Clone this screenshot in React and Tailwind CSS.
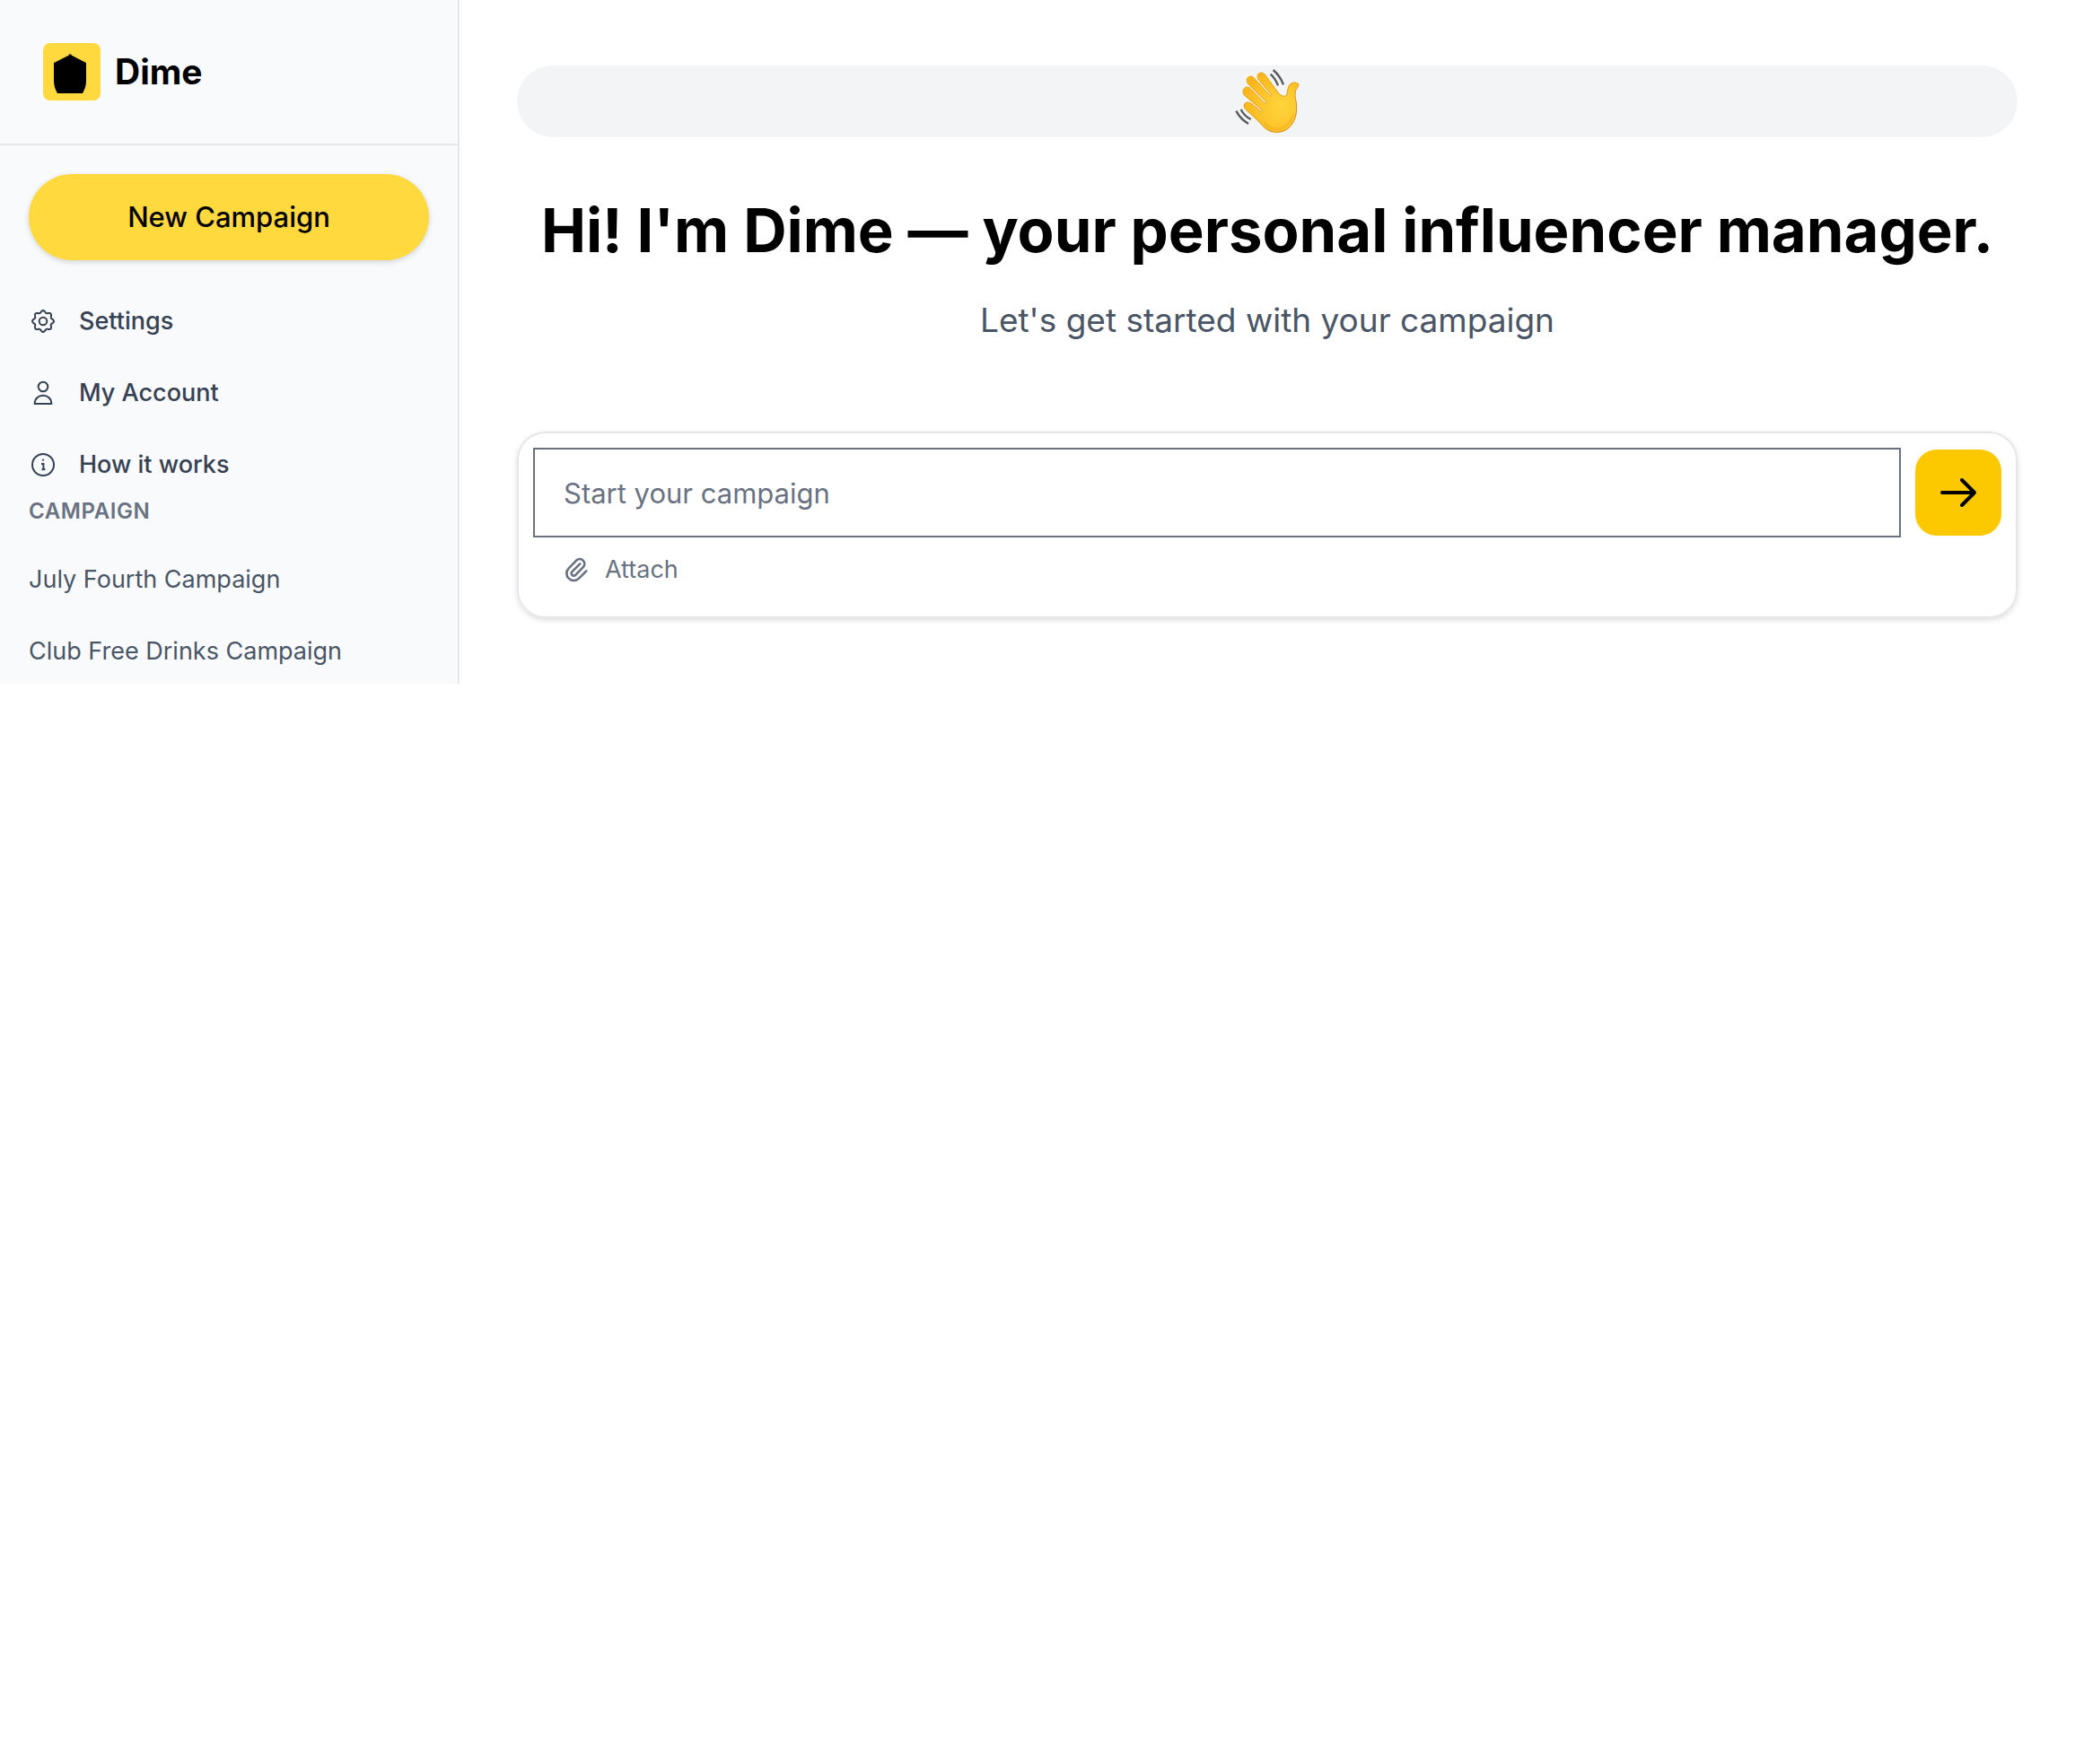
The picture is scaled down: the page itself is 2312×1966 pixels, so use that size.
const gearPath =
  Array.from({ length: 97 }, (_, i) => {
    const t = (i / 96) * Math.PI * 2;
    const r = 10.8 + 1.2 * Math.cos(8 * t);
    return `${i ? "L" : "M"}${(16 + r * Math.sin(t)).toFixed(2)} ${(16 - r * Math.cos(t)).toFixed(2)}`;
  }).join("") + "Z";

function Icon({ children }) {
  return (
    <svg viewBox="0 0 32 32" className="size-8 shrink-0" fill="none" stroke="currentColor" strokeWidth="2" aria-hidden="true">
      {children}
    </svg>
  );
}

function GearIcon() {
  return (
    <Icon>
      <path d={gearPath} strokeLinejoin="round" />
      <circle cx="16" cy="16" r="4.3" />
    </Icon>
  );
}

function UserIcon() {
  return (
    <Icon>
      <circle cx="16" cy="9" r="5.3" />
      <path d="M6.7 27.9h18.6c0-5.4-4-9.1-9.3-9.1s-9.3 3.7-9.3 9.1Z" />
    </Icon>
  );
}

function InfoIcon() {
  return (
    <Icon>
      <circle cx="16" cy="16" r="12" />
      <circle cx="16" cy="10.7" r="1.1" fill="currentColor" stroke="none" />
      <path d="M14 15h2.4v4.800c0 1 .6 1.500 2 1.500M14.500 21.300h1.800" />
    </Icon>
  );
}

function Logo() {
  return (
    <svg viewBox="0 0 64 64" className="size-16 rounded-lg bg-[#ffd93d]" aria-hidden="true">
      <path d="M28.5 12.6h3v.8L48 22v20c0 5-1.3 9.5-4 14H16c-2.7-4.5-4-9-4-14V22l17-8.6Z" />
    </svg>
  );
}

function WavingHand() {
  return (
    <svg viewBox="108 51 216 216" className="size-18" role="img" aria-label="Waving hand">
      <defs>
        <radialGradient id="skin" gradientUnits="userSpaceOnUse" cx="262" cy="176" r="125">
          <stop offset="0" stopColor="#ffd43c" />
          <stop offset="0.55" stopColor="#fdc62c" />
          <stop offset="1" stopColor="#f9b61c" />
        </radialGradient>
        <linearGradient id="rim" gradientUnits="userSpaceOnUse" x1="170" y1="80" x2="270" y2="262">
          <stop offset="0" stopColor="#eda912" />
          <stop offset="1" stopColor="#d48408" />
        </linearGradient>
      </defs>
      <path
        d="M183 76C183 62 200 58 209 70L252 129C262 142 276 146 281 136C285 126 283 112 292 102C301 93 318 95 321 103C322 108 313 115 310 126C306 145 316 160 314 185C313 225 290 261 250 262C222 263 205 248 190 228L144 186C134 176 138 162 150 162C156 162 160 165 165 168L193 191C197 195 201 191 197 187L142 141C130 130 135 112 147 111C153 110 158 114 163 119L207 164C211 168 215 164 212 160L152 101C143 88 149 76 160 75C167 75 172 80 176 85L226 140C229 144 232 141 230 137L187 87C184 83 183 80 183 76Z"
        fill="url(#skin)"
        stroke="url(#rim)"
        strokeWidth="3"
        strokeLinejoin="round"
      />
      <path d="M208 232C232 262 285 258 302 205" fill="none" stroke="#eca315" strokeWidth="8" strokeLinecap="round" opacity="0.35" />
      <g fill="none" stroke="#5a5a5a" strokeWidth="7">
        <path d="M236 54C250 66 262 82 270 103" />
        <path d="M227 68C238 78 246 90 252 106" />
        <path d="M112 191C121 208 135 223 153 234" />
        <path d="M128 186C135 200 145 211 161 219" />
      </g>
    </svg>
  );
}

const links = [
  { label: "Settings", icon: GearIcon },
  { label: "My Account", icon: UserIcon },
  { label: "How it works", icon: InfoIcon },
];

const campaigns = ["July Fourth Campaign", "Club Free Drinks Campaign"];

export default function App() {
  return (
    <div className="flex bg-white font-['Inter','Liberation_Sans',sans-serif] text-black">
      <aside className="w-[512px] shrink-0 border-r-2 border-gray-200 bg-gray-50">
        <div className="flex items-center gap-4 border-b-2 border-gray-200 p-12">
          <Logo />
          <span className="text-[39px] leading-14 font-bold">Dime</span>
        </div>
        <div className="px-8 pt-8 pb-2">
          <button type="button" className="h-24 w-full rounded-full bg-[#ffd93d] text-[31px] font-medium shadow-[0_2px_6px_rgba(0,0,0,0.16)]">
            New Campaign
          </button>
          <nav className="mt-10 flex flex-col gap-6">
            {links.map(({ label, icon: Glyph }) => (
              <a key={label} href="#" className="flex items-center gap-6 text-[27px] leading-14 font-medium text-gray-700">
                <Glyph />
                {label}
              </a>
            ))}
          </nav>
          <h2 className="text-[24px] leading-12 font-semibold tracking-wide text-gray-500 uppercase">Campaign</h2>
          <ul className="mt-6 flex flex-col gap-6">
            {campaigns.map((name) => (
              <li key={name}>
                <a href="#" className="block text-[27px] leading-14 text-gray-600">{name}</a>
              </li>
            ))}
          </ul>
        </div>
      </aside>

      <main className="min-w-0 flex-1 px-16 pt-[73px]">
        <div className="flex h-20 items-center justify-center rounded-full bg-gray-100">
          <WavingHand />
        </div>
        <h1 className="mt-16 text-center text-[67px] leading-20 font-bold">Hi! I'm Dime — your personal influencer manager.</h1>
        <p className="mt-8 text-center text-[37px] leading-14 text-gray-600">Let's get started with your campaign</p>

        <form className="mt-24 rounded-[32px] border-2 border-gray-200 p-4 pb-6 shadow-[0_2px_6px_rgba(0,0,0,0.14)]" onSubmit={(e) => e.preventDefault()}>
          <div className="flex items-center gap-4">
            <input
              type="text"
              aria-label="Start your campaign"
              placeholder="Start your campaign"
              className="h-25 min-w-0 flex-1 border-2 border-gray-500 px-8 text-[31px] outline-none placeholder:text-gray-500"
            />
            <button type="submit" aria-label="Send" className="flex size-24 items-center justify-center rounded-3xl bg-[#fcc800]">
              <svg viewBox="0 0 24 24" className="size-12" fill="none" stroke="currentColor" strokeWidth="2" strokeLinecap="round" strokeLinejoin="round" aria-hidden="true">
                <path d="M14 5l7 7m0 0l-7 7m7-7H3" />
              </svg>
            </button>
          </div>
          <button type="button" className="mt-2 ml-8 flex items-center gap-4 text-[27px] leading-14 text-gray-500">
            <svg viewBox="0 0 24 24" className="size-8" fill="none" stroke="currentColor" strokeWidth="2" strokeLinecap="round" strokeLinejoin="round" aria-hidden="true">
              <path d="M15.172 7l-6.586 6.586a2 2 0 102.828 2.828l6.414-6.586a4 4 0 00-5.656-5.656l-6.415 6.585a6 6 0 108.486 8.486L20.5 13" />
            </svg>
            Attach
          </button>
        </form>
      </main>
    </div>
  );
}
